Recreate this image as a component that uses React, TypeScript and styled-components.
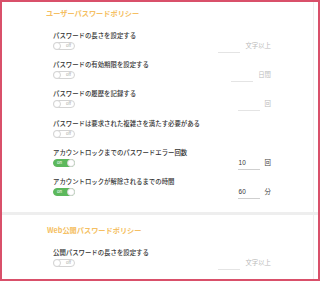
import React from 'react';
import styled, { createGlobalStyle } from 'styled-components';

const GlobalStyle = createGlobalStyle`
  html, body {
    margin: 0;
    padding: 0;
    background: #fff;
  }
  body {
    font-family: "Noto Sans CJK JP", "Noto Sans", sans-serif;
  }
`;

const Frame = styled.div`
  box-sizing: border-box;
  width: 320px;
  height: 281px;
  border: 2px solid #d9506a;
  overflow: hidden;
  background: #fff;
`;

const Panel = styled.div`
  box-sizing: border-box;
  width: 312px;
  border-right: 1px solid #eeeeee;
  height: 100%;
`;

const Section = styled.section<{ $top: number; $bottom: number }>`
  padding: ${(p) => p.$top}px 0 ${(p) => p.$bottom}px 44px;
`;

const Title = styled.h2<{ $shift?: number }>`
  margin: 0 0 13px ${(p) => p.$shift ?? 0}px;
  height: 10px;
  line-height: 10px;
  font-size: 7.2px;
  font-weight: 600;
  color: #f5bf63;
  white-space: nowrap;
`;

const Rows = styled.div`
  display: flex;
  flex-direction: column;
  gap: 7.2px;
  padding-left: 7px;
  width: 218px;
`;

const Row = styled.div`
  display: flex;
  flex-direction: column;
`;

const Label = styled.div`
  height: 10px;
  line-height: 10px;
  font-size: 6.4px;
  font-weight: 500;
  color: #333;
  white-space: nowrap;
`;

const ControlLine = styled.div`
  display: flex;
  align-items: flex-start;
  height: 12px;
`;

const Switch = styled.div<{ $on: boolean }>`
  box-sizing: border-box;
  margin-top: 1px;
  width: 22px;
  height: 8px;
  border-radius: 4px;
  border: 1px solid ${(p) => (p.$on ? '#5cb85c' : '#d4d4d4')};
  background: ${(p) => (p.$on ? '#5cb85c' : '#fff')};
  display: flex;
  flex-direction: ${(p) => (p.$on ? 'row' : 'row-reverse')};
  align-items: center;
  justify-content: space-between;
`;

const Knob = styled.span`
  box-sizing: border-box;
  width: 8px;
  height: 8px;
  margin: -1px;
  border-radius: 50%;
  background: #fff;
  border: 1px solid #d4d4d4;
`;

const SwitchText = styled.span<{ $on: boolean }>`
  font-family: "Liberation Sans", sans-serif;
  font-size: 4.5px;
  line-height: 6px;
  color: ${(p) => (p.$on ? '#fff' : '#aaa')};
  padding: ${(p) => (p.$on ? '0 0 0 3px' : '0 3px 0 0')};
`;

const Spacer = styled.div`
  flex: 1;
`;

const Field = styled.div<{ $on: boolean }>`
  box-sizing: border-box;
  width: 22px;
  height: 12px;
  border-bottom: 1px solid ${(p) => (p.$on ? '#cfcfcf' : '#e4e4e4')};
  padding-left: 1px;
  line-height: 10px;
  font-family: "Liberation Sans", sans-serif;
  font-size: 6.4px;
  color: #333;
`;

const Unit = styled.span<{ $on: boolean }>`
  margin-left: 5px;
  line-height: 10px;
  font-size: 6.4px;
  color: ${(p) => (p.$on ? '#444' : '#bbb')};
  white-space: nowrap;
`;

const Divider = styled.div`
  height: 3px;
  background: #eeeeee;
  width: 316px;
`;

type Item = { label: string; on: boolean; unit?: string; value?: string };

const userPolicy: Item[] = [
  { label: 'パスワードの長さを設定する', on: false, unit: '文字以上' },
  { label: 'パスワードの有効期限を設定する', on: false, unit: '日間' },
  { label: 'パスワードの履歴を記録する', on: false, unit: '回' },
  { label: 'パスワードは要求された複雑さを満たす必要がある', on: false },
  { label: 'アカウントロックまでのパスワードエラー回数', on: true, unit: '回', value: '10' },
  { label: 'アカウントロックが解除されるまでの時間', on: true, unit: '分', value: '60' },
];

const webPolicy: Item[] = [
  { label: '公開パスワードの長さを設定する', on: false, unit: '文字以上' },
];

const PolicyRow: React.FC<{ item: Item }> = ({ item }) => (
  <Row>
    <Label>{item.label}</Label>
    <ControlLine>
      <Switch $on={item.on}>
        <SwitchText $on={item.on}>{item.on ? 'on' : 'off'}</SwitchText>
        <Knob />
      </Switch>
      <Spacer />
      {item.unit && (
        <>
          <Field $on={item.on}>{item.value ?? ''}</Field>
          <Unit $on={item.on}>{item.unit}</Unit>
        </>
      )}
    </ControlLine>
  </Row>
);

const App: React.FC = () => {
  return (
    <>
      <GlobalStyle />
      <Frame>
        <Panel>
          <Section $top={6} $bottom={13}>
            <Title>ユーザーパスワードポリシー</Title>
            <Rows>
              {userPolicy.map((item) => (
                <PolicyRow key={item.label} item={item} />
              ))}
            </Rows>
          </Section>
          <Divider />
          <Section $top={10} $bottom={0}>
            <Title $shift={1}>Web公開パスワードポリシー</Title>
            <Rows>
              {webPolicy.map((item) => (
                <PolicyRow key={item.label} item={item} />
              ))}
            </Rows>
          </Section>
        </Panel>
      </Frame>
    </>
  );
};

export default App;
